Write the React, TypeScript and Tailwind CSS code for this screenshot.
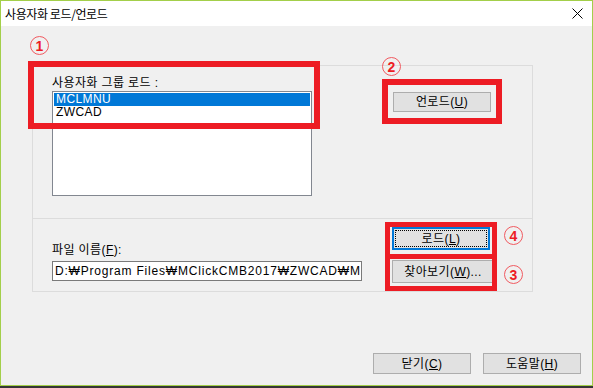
const ui = "font-['Liberation_Sans','Noto_Sans_CJK_KR',sans-serif] text-[12px] tracking-[0.4px] text-black"

function Btn({ children, focus, w = 98, h = 21 }: { children: React.ReactNode; focus?: boolean; w?: number; h?: number }) {
  return (
    <div
      className={
        focus
          ? 'flex items-center justify-center bg-[#e1e1e1] border-2 border-[#0078d7] p-[1px]'
          : 'flex items-center justify-center bg-[#e1e1e1] border border-[#adadad]'
      }
      style={{ width: w, height: h }}
    >
      {focus ? (
        <div className="w-full h-full flex items-center justify-center border border-dotted border-black leading-none">
          {children}
        </div>
      ) : (
        <span className="leading-none">{children}</span>
      )}
    </div>
  )
}

function Num({ n, className }: { n: string; className: string }) {
  return (
    <span
      className={
        'absolute flex items-center justify-center w-[19px] h-[19px] rounded-full border-[1.5px] border-[#f05a60] text-[#ed1c24] font-bold text-[14px] leading-none tracking-normal font-[Arial,sans-serif] ' +
        className
      }
    >
      {n}
    </span>
  )
}

export default function App() {
  return (
    <div className={'w-[593px] h-[388px] bg-[#353535] overflow-hidden ' + ui}>
      <div className="relative w-[593px] h-[386px] border border-[#a3cf4a] bg-[#f0f0f0] flex flex-col">
        {/* title bar */}
        <div className="h-[25px] bg-white flex items-center justify-between pl-[4px] pr-[9px] shrink-0">
          <span className="text-[12px] tracking-[-0.4px] font-['Noto_Sans_CJK_KR',sans-serif]">사용자화 로드/언로드</span>
          <svg width="11" height="11" viewBox="0 0 11 11">
            <path d="M0.5 0.5 L10.5 10.5 M10.5 0.5 L0.5 10.5" stroke="#000" strokeWidth="1" />
          </svg>
        </div>

        <div className="flex-1 flex flex-col pl-[31px] pt-[39px]">
          <div className="w-[501px] border border-[#dcdcdc]">
            {/* upper */}
            <div className="h-[153px] flex border-b border-[#dcdcdc]">
              <div className="pl-[19px] pt-[10px]">
                <div className="h-[15px] leading-[15px]">사용자화 그룹 로드 :</div>
                <div className="w-[260px] h-[105px] bg-white border border-[#828790] pt-[1px] px-[1px] leading-[13px]">
                  <div className="h-[13px] bg-[#0078d7] text-white pl-[2px]">MCLMNU</div>
                  <div className="h-[13px] pl-[2px]">ZWCAD</div>
                </div>
              </div>
              <div className="pl-[81px] pt-[26px]">
                <Btn w={98} h={20}>
                  언로드(<span className="underline">U</span>)
                </Btn>
              </div>
            </div>
            {/* lower */}
            <div className="h-[72px] flex">
              <div className="pl-[19px] pt-[23px]">
                <div className="h-[16px] leading-[16px]">
                  파일 이름(<span className="underline">F</span>):
                </div>
                <div className="mt-[3px] w-[310px] h-[20px] bg-white border border-[#7a7a7a] overflow-hidden whitespace-nowrap leading-[18px] pl-[2px] tracking-[0.8px]">
                  D:₩Program Files₩MClickCMB2017₩ZWCAD₩M
                </div>
              </div>
              <div className="pl-[30px] pt-[8px] flex flex-col gap-[10px]">
                <Btn focus w={98} h={23}>
                  로드(<span className="underline">L</span>)
                </Btn>
                <Btn w={102} h={23}>
                  찾아보기(<span className="underline">W</span>)...
                </Btn>
              </div>
            </div>
          </div>

          <div className="mt-[61px] flex justify-end gap-[12px] pr-[11px]">
            <Btn>
              닫기(<span className="underline">C</span>)
            </Btn>
            <Btn>
              도움말(<span className="underline">H</span>)
            </Btn>
          </div>
        </div>

        {/* annotations */}
        <div className="absolute left-[27px] top-[60px] w-[292px] h-[68px] border-[6px] border-[#ed1c24]" />
        <div className="absolute left-[381px] top-[78px] w-[120px] h-[45px] border-[6px] border-[#ed1c24]" />
        <div className="absolute left-[384px] top-[221px] w-[112px] h-[37px] border-[5px] border-[#ed1c24]" />
        <div className="absolute left-[384px] top-[253px] w-[112px] h-[37px] border-[5px] border-[#ed1c24]" />
        <Num n="1" className="left-[29px] top-[35px]" />
        <Num n="2" className="left-[381px] top-[56px]" />
        <Num n="4" className="left-[503px] top-[225px]" />
        <Num n="3" className="left-[503px] top-[264px]" />
      </div>
    </div>
  )
}
